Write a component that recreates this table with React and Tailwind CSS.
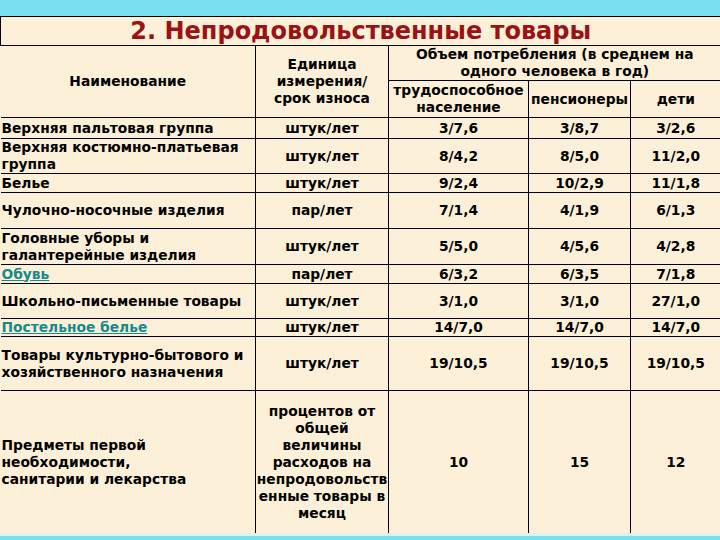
const rows = [
  { name: "Верхняя пальтовая группа", unit: "штук/лет", a: "3/7,6", b: "3/8,7", c: "3/2,6", h: "h-[21px]" },
  { name: "Верхняя костюмно-платьевая группа", unit: "штук/лет", a: "8/4,2", b: "8/5,0", c: "11/2,0", h: "h-[33px]" },
  { name: "Белье", unit: "штук/лет", a: "9/2,4", b: "10/2,9", c: "11/1,8", h: "h-[19px]" },
  { name: "Чулочно-носочные изделия", unit: "пар/лет", a: "7/1,4", b: "4/1,9", c: "6/1,3", h: "h-[36px]" },
  { name: "Головные уборы и галантерейные изделия", unit: "штук/лет", a: "5/5,0", b: "4/5,6", c: "4/2,8", h: "h-[36px]" },
  { name: "Обувь", unit: "пар/лет", a: "6/3,2", b: "6/3,5", c: "7/1,8", h: "h-[19px]", link: true },
  { name: "Школьно-письменные товары", unit: "штук/лет", a: "3/1,0", b: "3/1,0", c: "27/1,0", h: "h-[35px]" },
  { name: "Постельное белье", unit: "штук/лет", a: "14/7,0", b: "14/7,0", c: "14/7,0", h: "h-[16px]", link: true },
  { name: "Товары культурно-бытового и хозяйственного назначения", unit: "штук/лет", a: "19/10,5", b: "19/10,5", c: "19/10,5", h: "h-[54px]" },
];

const cell = "border border-black align-middle text-center p-0";

export default function App() {
  return (
    <div className="w-[720px] h-[540px] bg-[#7be0f1] flex flex-col overflow-hidden" style={{ fontFamily: '"DejaVu Sans", Verdana, sans-serif' }}>
      <div className="h-[16px] shrink-0" />
      <div className="bg-[#fcf0d9] h-[517px] shrink-0 overflow-hidden">
        <table className="table-fixed border-collapse w-[720px] text-[13.8px] font-bold text-black leading-[17px]">
          <colgroup>
            <col className="w-[255px]" />
            <col className="w-[133px]" />
            <col className="w-[140px]" />
            <col className="w-[102px]" />
            <col className="w-[90px]" />
          </colgroup>
          <tbody>
            <tr className="h-[29px]">
              <td colSpan={5} className="border-t border-b border-l border-black border-r-0 text-center align-middle text-[24px] leading-[26px] text-[#9c1212]">
                2. Непродовольственные товары
              </td>
            </tr>
            <tr className="h-[35px]">
              <td rowSpan={2} className={cell + " border-l-0"}>Наименование</td>
              <td rowSpan={2} className={cell}>
                Единица<br />измерения/<br />срок износа
              </td>
              <td colSpan={3} className={cell + " border-r-0 whitespace-nowrap"}>
                Объем потребления (в среднем на<br />одного человека в год)
              </td>
            </tr>
            <tr className="h-[37px]">
              <td className={cell + " whitespace-nowrap"}>трудоспособное<br />население</td>
              <td className={cell + " whitespace-nowrap"}>пенсионеры</td>
              <td className={cell + " border-r-0"}>дети</td>
            </tr>
            {rows.map((r) => (
              <tr key={r.name} className={r.h}>
                <td className={cell + " border-l-0 text-left pl-[1px]"}>
                  {r.link ? (
                    <span className="text-[#178a8c] underline">{r.name}</span>
                  ) : (
                    r.name
                  )}
                </td>
                <td className={cell}>{r.unit}</td>
                <td className={cell}>{r.a}</td>
                <td className={cell}>{r.b}</td>
                <td className={cell + " border-r-0"}>{r.c}</td>
              </tr>
            ))}
            <tr className="h-[144px]">
              <td className={cell + " border-l-0 border-b-0 text-left pl-[1px]"}>
                Предметы первой<br />необходимости,<br />санитарии и лекарства
              </td>
              <td className={cell + " border-b-0 whitespace-nowrap overflow-hidden"}>
                процентов от<br />общей<br />величины<br />расходов на<br />непродовольств<br />енные товары в<br />месяц
              </td>
              <td className={cell + " border-b-0"}>10</td>
              <td className={cell + " border-b-0"}>15</td>
              <td className={cell + " border-b-0 border-r-0"}>12</td>
            </tr>
          </tbody>
        </table>
      </div>
      <div className="h-[3px] bg-[#dff3ee] shrink-0" />
    </div>
  );
}
